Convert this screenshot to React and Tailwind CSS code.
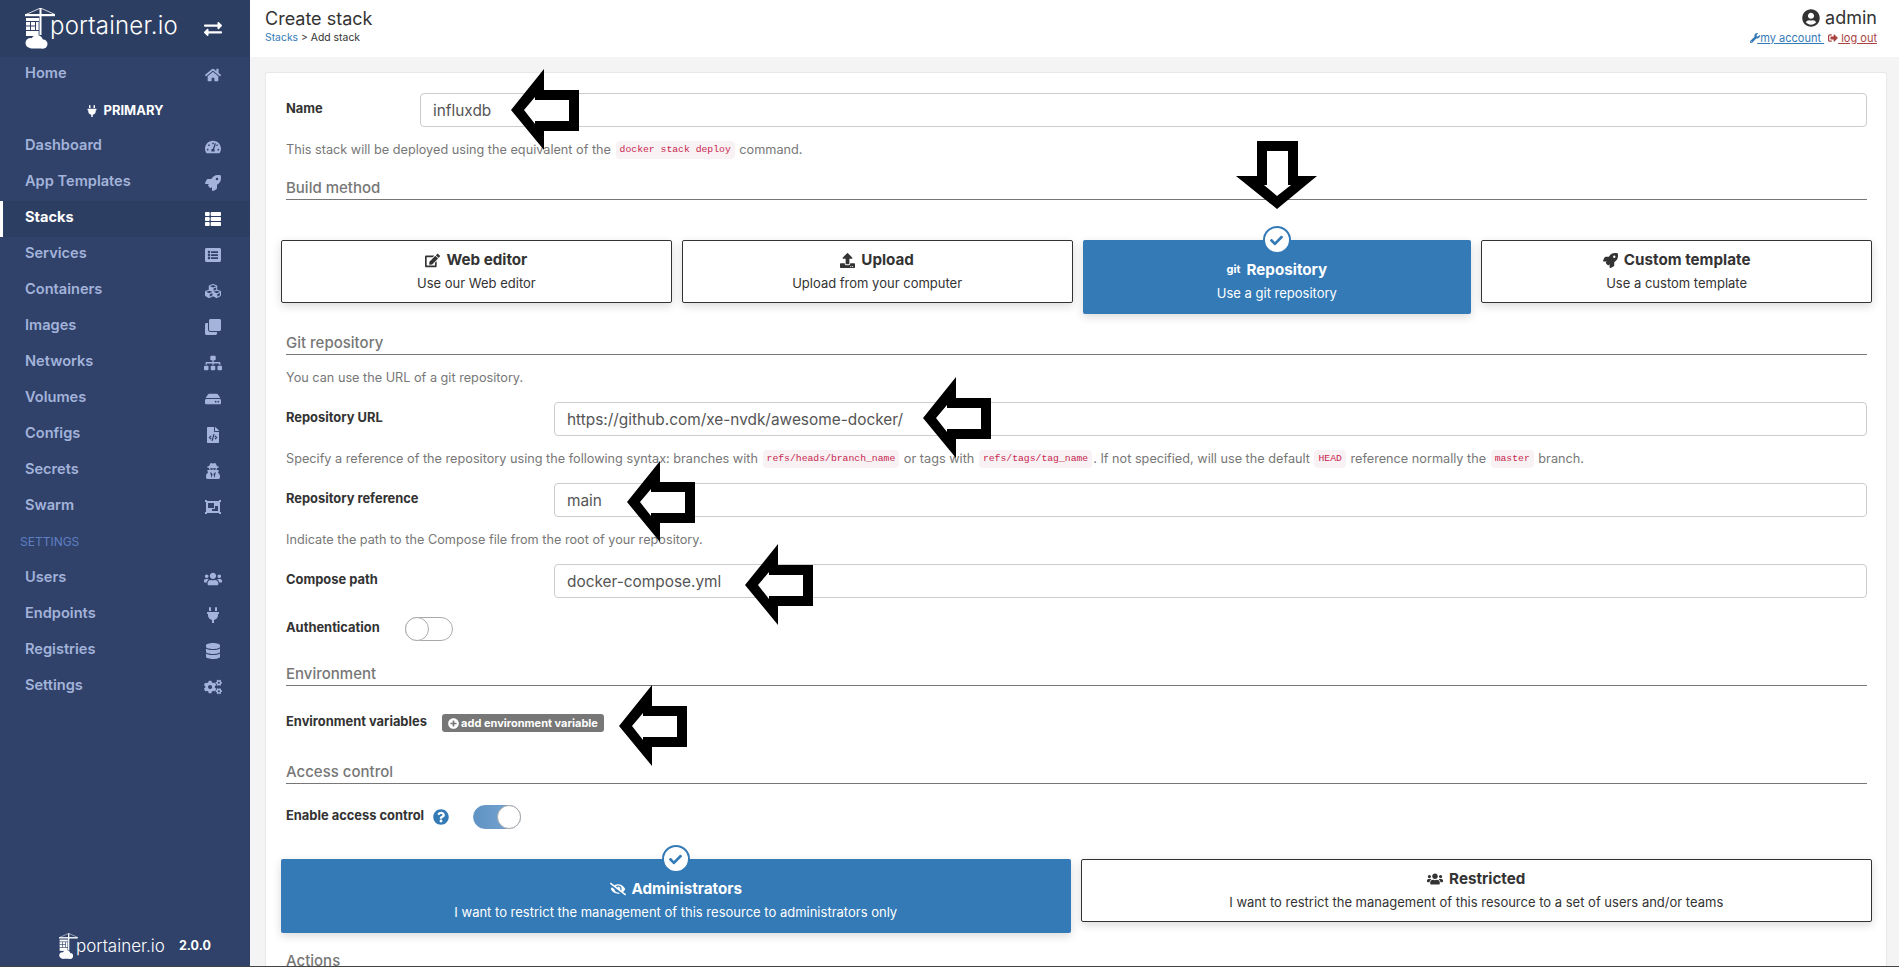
import {
  FaHome, FaTachometerAlt, FaRocket, FaThList, FaListAlt, FaCubes, FaClone, FaSitemap, FaHdd,
  FaFileCode, FaUserSecret, FaObjectGroup, FaUsers, FaPlug, FaDatabase, FaCogs, FaExchangeAlt,
  FaEdit, FaUpload, FaCheck, FaUserCircle, FaWrench, FaSignOutAlt, FaPlusCircle, FaQuestionCircle,
  FaEyeSlash,
} from "react-icons/fa";

const topNav = [
  { label: "Dashboard", icon: FaTachometerAlt },
  { label: "App Templates", icon: FaRocket },
  { label: "Stacks", icon: FaThList, active: true },
  { label: "Services", icon: FaListAlt },
  { label: "Containers", icon: FaCubes },
  { label: "Images", icon: FaClone },
  { label: "Networks", icon: FaSitemap, wide: true },
  { label: "Volumes", icon: FaHdd },
  { label: "Configs", icon: FaFileCode },
  { label: "Secrets", icon: FaUserSecret },
  { label: "Swarm", icon: FaObjectGroup },
];

const settingsNav = [
  { label: "Users", icon: FaUsers, wide: true },
  { label: "Endpoints", icon: FaPlug },
  { label: "Registries", icon: FaDatabase },
  { label: "Settings", icon: FaCogs, wide: true },
];

function LogoMark({ className }) {
  return (
    <svg viewBox="0 0 32 42" className={className} fill="#fff">
      <rect x="14.5" y="0" width="2" height="27" />
      <rect x="0" y="6" width="30" height="2.2" />
      <path d="M15.5 0 L1 6.5 M15.5 0 L30 6.5" stroke="#fff" strokeWidth="0.8" fill="none" />
      <rect x="1" y="10" width="13" height="3" />
      <rect x="1" y="14" width="4" height="3.5" />
      <rect x="6" y="14" width="4" height="3.5" />
      <rect x="1" y="18.5" width="4" height="3.5" />
      <rect x="6" y="18.5" width="4" height="3.5" />
      <rect x="11" y="14" width="2.6" height="8" />
      <rect x="1" y="23" width="12.6" height="5" />
      <circle cx="5.5" cy="35" r="5" />
      <circle cx="12" cy="33" r="6" />
      <circle cx="18" cy="36" r="4.5" />
      <rect x="4" y="35" width="16" height="5.5" rx="2.5" />
    </svg>
  );
}

function NavRow({ label, icon: Icon, active, wide }) {
  return (
    <div
      className={`flex h-9 items-center justify-between pr-[27px] text-[14.6px] ${
        active ? "border-l-[3px] border-white bg-[#2d3e63] pl-[22px] font-bold text-white" : "pl-[25px] font-semibold text-[#a3b3da]"
      }`}
    >
      <span className="mb-[2px]">{label}</span>
      <span className="flex w-5 justify-center">
        <Icon className={wide ? "text-[18px]" : "text-[16px]"} />
      </span>
    </div>
  );
}

function Sidebar() {
  return (
    <aside className="flex h-full w-[250px] shrink-0 flex-col bg-[#30426a]">
      <div className="flex h-[57px] items-center bg-[#2d3e63] pl-[25px] pr-[27px]">
        <LogoMark className="h-[42px] w-[32px] shrink-0" />
        <span className="ml-[-7px] mt-[-6px] text-[24px] font-light leading-none tracking-[0.2px] text-white">portainer.io</span>
        <span className="ml-auto flex w-5 justify-center">
          <FaExchangeAlt className="text-[18px] text-white" />
        </span>
      </div>
      <NavRow label="Home" icon={FaHome} />
      <div className="flex h-9 items-center justify-center gap-[5px] text-[13px] font-bold text-white">
        <FaPlug className="text-[12px]" />
        <span className="mb-[1px]">PRIMARY</span>
      </div>
      {topNav.map((item) => (
        <NavRow key={item.label} {...item} />
      ))}
      <div className="flex h-9 items-center pb-[2px] pl-5 text-[12px] text-[#5f7fc4]">SETTINGS</div>
      {settingsNav.map((item) => (
        <NavRow key={item.label} {...item} />
      ))}
      <div className="mt-auto flex items-center pb-[7px] pl-[59px]">
        <LogoMark className="h-[27px] w-[20px] shrink-0" />
        <span className="ml-[-3px] text-[17px] font-light leading-none text-white">portainer.io</span>
        <span className="ml-[14px] text-[12.5px] font-bold text-white">2.0.0</span>
      </div>
    </aside>
  );
}

function Header() {
  return (
    <header className="flex h-[57px] shrink-0 items-start justify-between bg-white pl-[15px] pr-[22px]">
      <div>
        <div className="mt-[9px] text-[18px] leading-5 text-[#333]">Create stack</div>
        <div className="mt-[2px] text-[10.4px] leading-[14px] text-[#333]">
          <span className="text-[#337ab7]">Stacks</span> &gt; Add stack
        </div>
      </div>
      <div className="flex flex-col items-end">
        <div className="mt-[8px] flex items-center gap-[5px] text-[18px] leading-5 text-[#333]">
          <FaUserCircle className="text-[18px]" />
          <span>admin</span>
        </div>
        <div className="mt-[3px] flex items-center text-[11px] leading-[14px]">
          <FaWrench className="mr-[-3px] text-[10px] text-[#337ab7]" />
          <a className="text-[#337ab7] underline">&nbsp;my account&nbsp;</a>
          <FaSignOutAlt className="ml-[4px] text-[10px] text-[#a94442]" />
          <a className="text-[#a94442] underline">&nbsp;log out</a>
        </div>
      </div>
    </header>
  );
}

function Code({ children }) {
  return (
    <code className="mx-[1px] rounded-[4px] bg-[#f9f2f4] px-[4px] py-[2px] font-['Liberation_Mono',monospace] text-[9.75px] text-[#c7254e]">
      {children}
    </code>
  );
}

function Help({ children, className = "" }) {
  return <div className={`flex h-[22px] items-center whitespace-pre text-[12.7px] text-[#777] ${className}`}>{children}</div>;
}

function SectionTitle({ children, className = "" }) {
  return (
    <div className={`flex h-[23px] items-center border-b border-[#777] text-[15px] font-medium text-[#777] ${className}`}>
      {children}
    </div>
  );
}

function TextRow({ label, value, inputLeft, className = "" }) {
  return (
    <div className={`flex items-center ${className}`}>
      <label className={`mb-[2px] shrink-0 text-[12.9px] font-bold text-[#333] ${inputLeft}`}>{label}</label>
      <input
        readOnly
        value={value}
        className="h-[34px] flex-1 rounded-[4px] border border-[#ccc] bg-white px-3 text-[15.4px] text-[#555] outline-none"
      />
    </div>
  );
}

function Toggle({ on }) {
  return (
    <div
      className={`relative h-6 w-12 rounded-full border ${
        on ? "border-[#6a9bc9] bg-gradient-to-r from-[#5f93c4] to-[#7ba7d0]" : "border-[#aaa] bg-white"
      }`}
    >
      <div
        className={`absolute top-[-1px] h-6 w-6 rounded-full border border-[#aaa] bg-white ${
          on ? "right-[-1px]" : "left-[-1px]"
        }`}
      />
    </div>
  );
}

function BoxOption({ icon, title, text, selected }) {
  return (
    <div
      className={`relative flex flex-1 flex-col items-center rounded-[2px] text-center shadow-[0_3px_10px_rgba(0,0,0,0.15)] ${
        selected
          ? "h-[74px] bg-[#337ab7] pt-[20px] text-white"
          : "h-[63px] border border-[#333] bg-white pt-[9px] text-[#333]"
      }`}
    >
      {selected && (
        <div className="absolute left-1/2 top-[-14px] flex h-7 w-7 -translate-x-1/2 items-center justify-center rounded-full border-2 border-[#337ab7] bg-white">
          <FaCheck className="text-[13px] text-[#337ab7]" />
        </div>
      )}
      <div className="flex h-5 items-center gap-[6px] text-[15.2px] font-bold leading-5">
        {icon}
        <span>{title}</span>
      </div>
      <div className="mt-[3px] text-[13px] leading-5">{text}</div>
    </div>
  );
}

// hollow annotation arrow drawn over the page
function Arrow({ x, y, down }) {
  if (down) {
    return (
      <svg viewBox="0 0 81 68" className="absolute h-[68px] w-[81px]" style={{ left: x, top: y }}>
        <polygon points="41,68 0,35 21,35 21,0 62,0 62,35 81,35" fill="#000" />
        <polygon points="41,55 28,44 31,44 31,10 52,10 52,44 55,44" fill="#fff" />
      </svg>
    );
  }
  return (
    <svg viewBox="0 0 68 81" className="absolute h-[81px] w-[68px]" style={{ left: x, top: y }}>
      <polygon points="0,41 33,0 33,21 68,21 68,62 33,62 33,81" fill="#000" />
      <polygon points="13,41 24,28 24,31 58,31 58,52 24,52 24,55" fill="#fff" />
    </svg>
  );
}

function CreateStackForm() {
  return (
    <div className="ml-[15px] mr-3 mt-[15px] h-[900px] overflow-hidden rounded-[2px] border border-[#e8e8e8] bg-white pl-5 pr-[19px] pt-[20px]">
      <TextRow label="Name" value="influxdb" inputLeft="w-[134px]" />
      <Help className="mt-3">
        This stack will be deployed using the equivalent of the <Code>docker stack deploy</Code> command.
      </Help>
      <SectionTitle className="mt-4">Build method</SectionTitle>

      <div className="mx-[-5px] mt-10 flex h-[74px] items-start gap-[10px]">
        <BoxOption icon={<FaEdit className="text-[15px]" />} title="Web editor" text="Use our Web editor" />
        <BoxOption icon={<FaUpload className="text-[15px]" />} title="Upload" text="Upload from your computer" />
        <BoxOption
          selected
          icon={<span className="mb-[2px] text-[11px] font-bold leading-none">git</span>}
          title="Repository"
          text="Use a git repository"
        />
        <BoxOption icon={<FaRocket className="text-[15px]" />} title="Custom template" text="Use a custom template" />
      </div>

      <SectionTitle className="mt-[18px]">Git repository</SectionTitle>
      <Help className="mt-3">You can use the URL of a git repository.</Help>
      <TextRow
        className="mt-[13px]"
        label="Repository URL"
        value="https://github.com/xe-nvdk/awesome-docker/"
        inputLeft="w-[268px]"
      />
      <Help className="mt-3">
        Specify a reference of the repository using the following syntax: branches with <Code>refs/heads/branch_name</Code> or tags with <Code>refs/tags/tag_name</Code>. If not specified, will use the default <Code>HEAD</Code> reference normally the <Code>master</Code> branch.
      </Help>
      <TextRow className="mt-[13px]" label="Repository reference" value="main" inputLeft="w-[268px]" />
      <Help className="mt-3">Indicate the path to the Compose file from the root of your repository.</Help>
      <TextRow className="mt-[13px]" label="Compose path" value="docker-compose.yml" inputLeft="w-[268px]" />

      <div className="mt-[19px] flex h-6 items-center">
        <label className="mb-[2px] w-[119px] text-[12.9px] font-bold text-[#333]">Authentication</label>
        <Toggle />
      </div>

      <SectionTitle className="mt-[22px]">Environment</SectionTitle>
      <div className="mt-[28px] flex h-[18px] items-center">
        <label className="mb-[2px] w-[156px] text-[12.9px] font-bold text-[#333]">Environment variables</label>
        <button className="flex h-[18px] w-[162px] items-center justify-center gap-[2px] rounded-[3px] bg-[#777] text-[11px] font-bold text-white">
          <FaPlusCircle className="text-[11px]" />
          add environment variable
        </button>
      </div>

      <SectionTitle className="mt-[29px]">Access control</SectionTitle>
      <div className="mt-5 flex h-[25px] items-center">
        <label className="mb-[2px] text-[12.9px] font-bold text-[#333]">Enable access control</label>
        <FaQuestionCircle className="ml-[9px] text-[16px] text-[#337ab7]" />
        <div className="ml-[24px]">
          <Toggle on />
        </div>
      </div>

      <div className="mx-[-5px] mt-[30px] flex h-[74px] items-start gap-[10px]">
        <BoxOption
          selected
          icon={<FaEyeSlash className="text-[16px]" />}
          title="Administrators"
          text="I want to restrict the management of this resource to administrators only"
        />
        <BoxOption
          icon={<FaUsers className="text-[16px]" />}
          title="Restricted"
          text="I want to restrict the management of this resource to a set of users and/or teams"
        />
      </div>

      <SectionTitle className="mt-[17px]">Actions</SectionTitle>
    </div>
  );
}

export default function App() {
  return (
    <div className="relative flex h-[967px] w-[1899px] overflow-hidden bg-[#f4f4f4] font-['Inter',sans-serif]">
      <Sidebar />
      <main className="flex min-w-0 flex-1 flex-col">
        <Header />
        <CreateStackForm />
      </main>

      <Arrow x={511} y={69} />
      <Arrow x={1236} y={141} down />
      <Arrow x={923} y={377} />
      <Arrow x={627} y={461} />
      <Arrow x={745} y={544} />
      <Arrow x={619} y={685} />

      <div className="absolute bottom-0 left-0 h-px w-full bg-[#444]" />
    </div>
  );
}
